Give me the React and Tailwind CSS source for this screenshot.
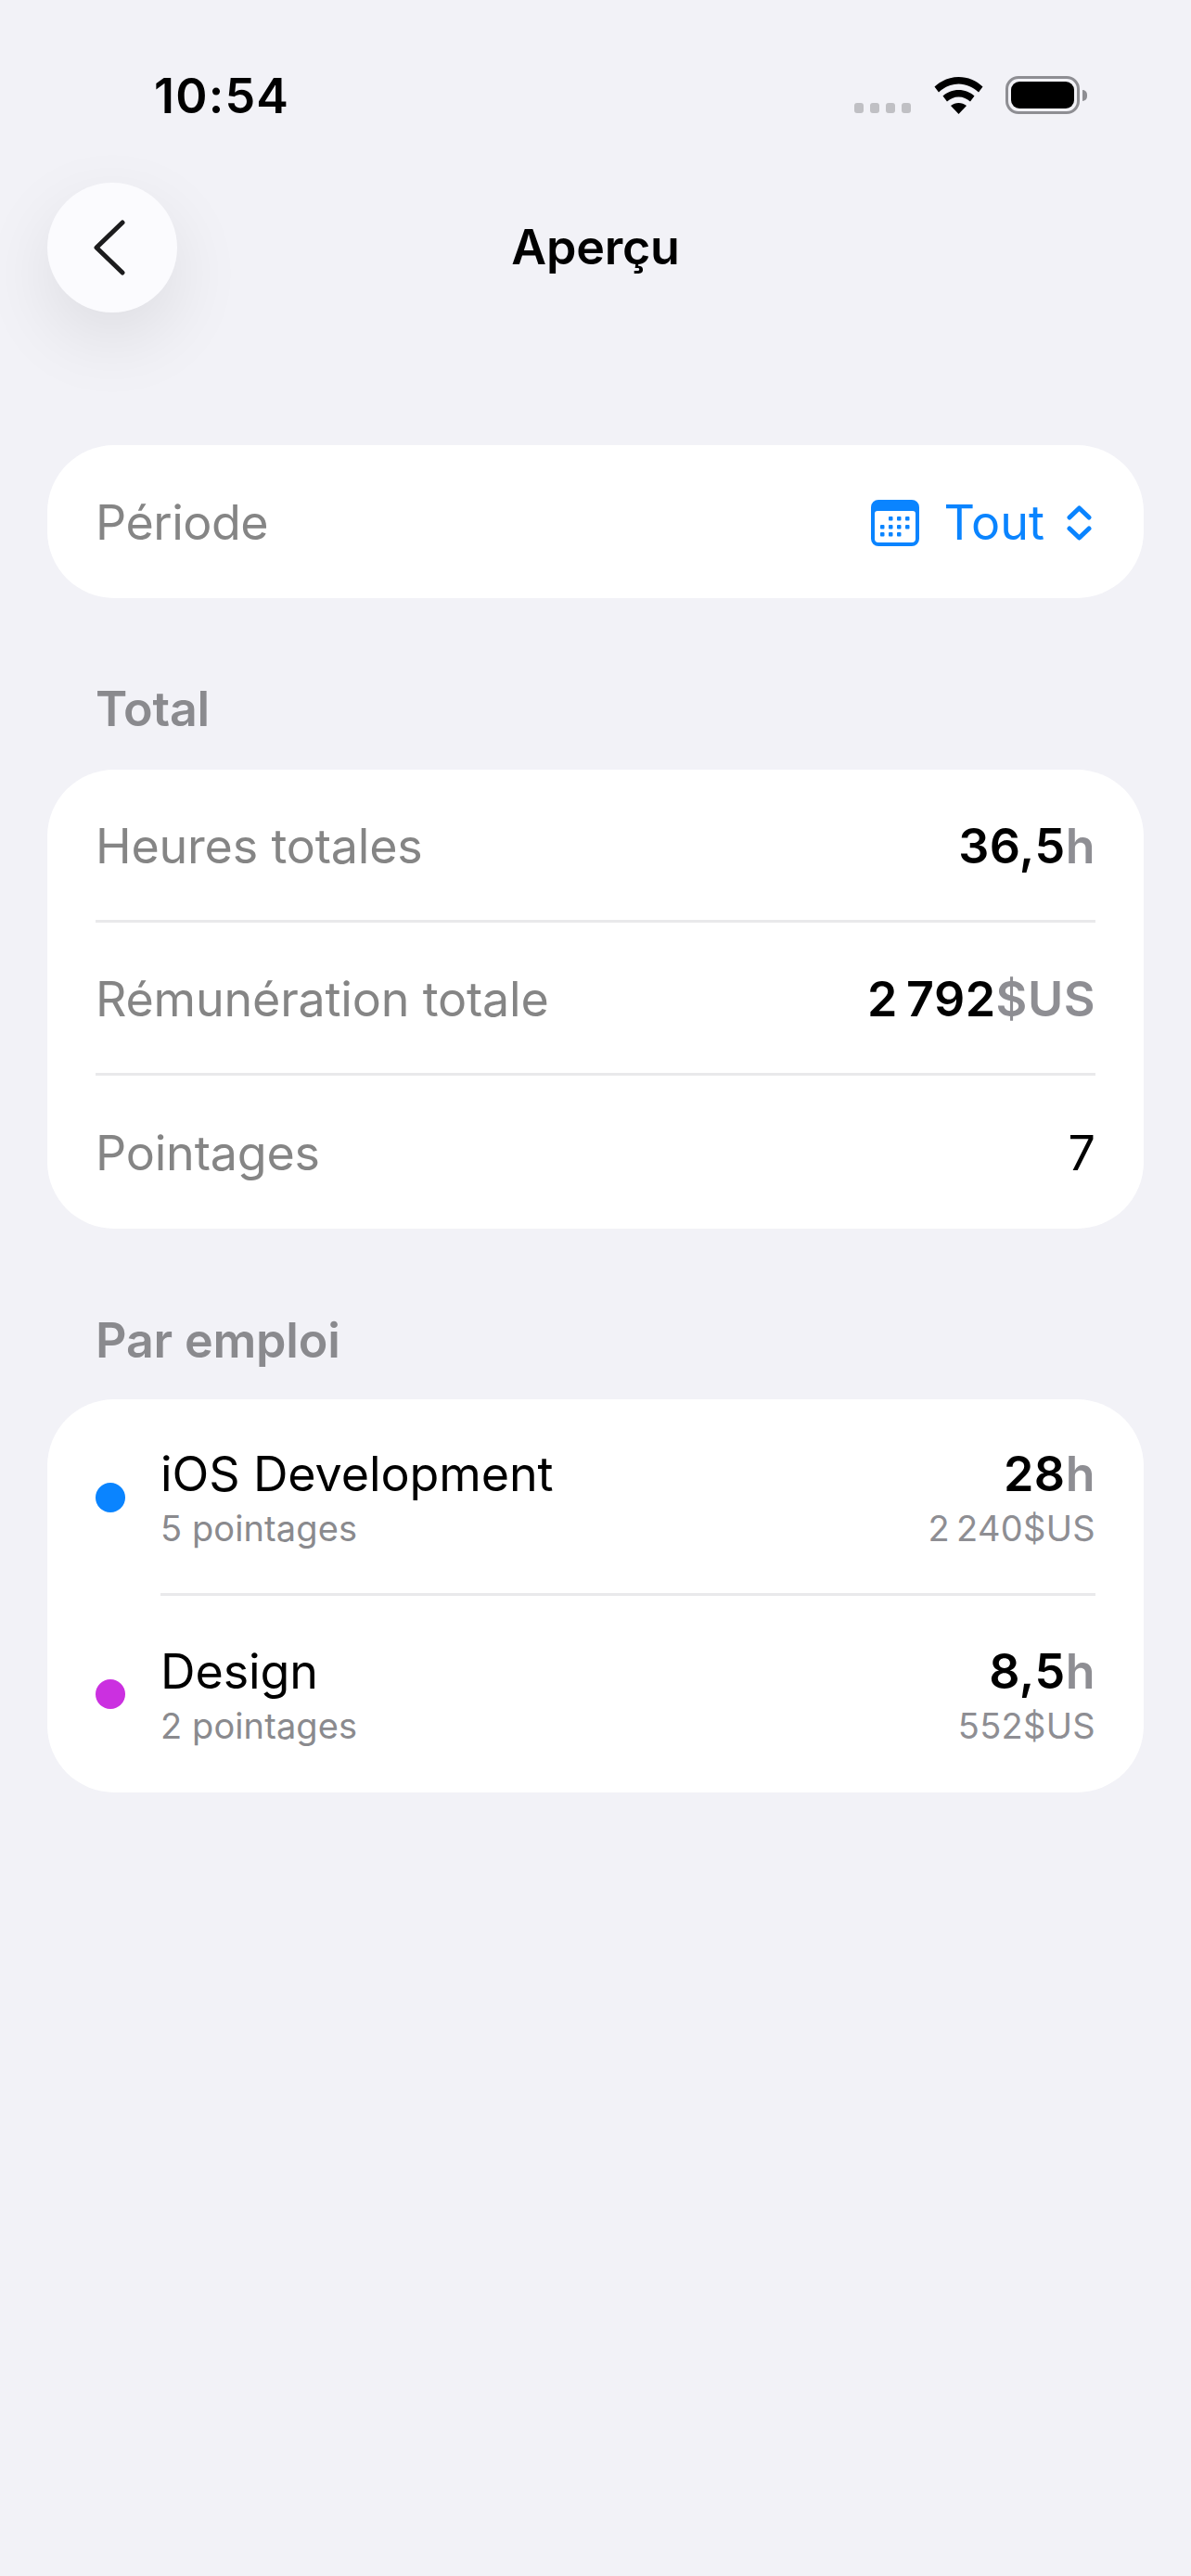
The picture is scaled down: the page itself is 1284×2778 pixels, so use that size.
const font = { fontFamily: 'Inter, sans-serif' }

const Value = ({ num, unit }) => (
  <div className="text-[52px] leading-[62px] font-semibold tracking-[0.5px] text-black">
    {num}<span className="text-[#8e8e93]">{unit}</span>
  </div>
)

const Row = ({ label, children, last }) => (
  <div className={`h-[165px] pt-[3px] flex items-center justify-between ${last ? '' : 'border-b-[3px] border-[#e9e9eb]'}`}>
    <span className="text-[52px] tracking-[-0.2px] text-[#858585]">{label}</span>
    {children}
  </div>
)

const SectionTitle = ({ children }) => (
  <h2 className="px-[103px] text-[52px] leading-[62px] font-semibold tracking-[-0.2px] text-[#8a8a8e]">{children}</h2>
)

const JobRow = ({ color, name, count, hours, pay, last }) => (
  <div className="flex items-center">
    <div className={`w-[32px] h-[32px] rounded-full mr-[38px] shrink-0 ${color}`} />
    <div className={`flex-1 flex items-center justify-between h-[212px] pt-[2px] ${last ? '' : 'border-b-[3px] border-[#e9e9eb]'}`}>
      <div>
        <div className="text-[52px] leading-[62px] tracking-[-0.1px] text-black">{name}</div>
        <div className="text-[38px] leading-[46px] tracking-[0.1px] text-[#8a8a8e] mt-[4px]">{count}</div>
      </div>
      <div className="text-right">
        <Value num={hours} unit="h" />
        <div className="text-[38px] leading-[46px] tracking-[0.3px] text-[#8e8e93] mt-[4px]">{pay}</div>
      </div>
    </div>
  </div>
)

const BackIcon = () => (
  <svg width="38" height="64" viewBox="0 0 38 64" fill="none" stroke="#1c1c1e" strokeWidth="5" strokeLinecap="round" strokeLinejoin="round">
    <path d="M33 5 L5 32 L33 59" />
  </svg>
)

const CalendarIcon = () => (
  <svg width="52" height="50" viewBox="0 0 52 50">
    <path fillRule="evenodd" fill="#0a84ff" d="M8 0h36a8 8 0 0 1 8 8v34a8 8 0 0 1-8 8H8a8 8 0 0 1-8-8V8a8 8 0 0 1 8-8zM7 12a3 3 0 0 0-3 3v27a4 4 0 0 0 4 4h36a4 4 0 0 0 4-4V15a3 3 0 0 0-3-3z" />
    {[[21, 20], [30, 20], [39, 20], [12, 29], [21, 29], [30, 29], [39, 29], [12, 37], [21, 37], [30, 37]].map(([x, y]) => (
      <rect key={`${x}-${y}`} x={x - 2} y={y - 2} width="4.5" height="4.5" rx="1" fill="#0a84ff" />
    ))}
  </svg>
)

const UpDownIcon = () => (
  <svg width="27" height="38" viewBox="0 0 27 38" fill="none" stroke="#0a84ff" strokeWidth="5" strokeLinecap="round" strokeLinejoin="round">
    <path d="M3 13 L13.5 3 L24 13" />
    <path d="M3 25 L13.5 35 L24 25" />
  </svg>
)

const StatusIcons = () => (
  <div className="flex items-end">
    <div className="flex gap-[7px] mb-[1px] mr-[25px]">
      <div className="w-[10px] h-[11px] rounded-[3px] bg-[#c0c0c4]" />
      <div className="w-[10px] h-[11px] rounded-[3px] bg-[#c0c0c4]" />
      <div className="w-[10px] h-[11px] rounded-[3px] bg-[#c0c0c4]" />
      <div className="w-[10px] h-[11px] rounded-[3px] bg-[#c0c0c4]" />
    </div>
    <svg width="53" height="40" viewBox="0 0 53 40" className="mr-[24px]">
      <path d="M26.5 0C16.5 0 7.5 4 0.5 10.5L5 16.5C11 11 18.5 7.5 26.5 7.5C34.5 7.5 42 11 48 16.5L52.5 10.5C45.5 4 36.5 0 26.5 0Z" />
      <path d="M26.5 14C20 14 14 16.5 9.5 20.5L14 26.5C17.5 23.5 21.5 21.5 26.5 21.5C31.5 21.5 35.5 23.5 39 26.5L43.5 20.5C39 16.5 33 14 26.5 14Z" />
      <path d="M26.5 28C23.5 28 20.5 29 18 31L26.5 40L35 31C32.5 29 29.5 28 26.5 28Z" />
    </svg>
    <div className="flex items-center">
      <div className="w-[80px] h-[41px] rounded-[14px] border-[3px] border-[#8e8e93] p-[3px]">
        <div className="w-full h-full rounded-[9px] bg-black" />
      </div>
      <div className="w-[5px] h-[12px] ml-[3px] rounded-r-[5px] bg-[#8e8e93]" />
    </div>
  </div>
)

const App = () => {
  return (
    <div style={font} className="min-h-[2778px] bg-[#f2f2f7] text-black">
      <div className="h-[197px] pt-[73px] pl-[166px] pr-[112px] flex items-start justify-between">
        <div className="text-[52px] leading-[62px] font-semibold tracking-[1.2px]">10:54</div>
        <div className="pt-[9px]"><StatusIcons /></div>
      </div>

      <div className="px-[51px] grid grid-cols-[140px_1fr_140px] items-center">
        <div className="w-[140px] h-[140px] rounded-full bg-[#fbfbfe] flex items-center justify-center pr-[6px] shadow-[0_28px_80px_rgba(0,0,0,0.09)]">
          <BackIcon />
        </div>
        <h1 className="text-center text-[52px] leading-[62px] font-semibold tracking-[-0.2px]">Aperçu</h1>
      </div>

      <div className="mt-[143px] mx-[51px] h-[165px] rounded-[72px] bg-white pl-[52px] pr-[56px] pt-[3px] flex items-center justify-between">
        <span className="text-[52px] tracking-[-0.5px] text-[#858585]">Période</span>
        <div className="flex items-center">
          <CalendarIcon />
          <span className="ml-[27px] mr-[24px] text-[52px] text-[#0a84ff]">Tout</span>
          <UpDownIcon />
        </div>
      </div>

      <div className="mt-[89px]"><SectionTitle>Total</SectionTitle></div>
      <div className="mt-[34px] mx-[51px] rounded-[72px] bg-white px-[52px]">
        <Row label="Heures totales"><Value num="36,5" unit="h" /></Row>
        <Row label="Rémunération totale"><Value num={'2\u202f792'} unit="$US" /></Row>
        <Row label="Pointages" last><span className="text-[52px] text-black">7</span></Row>
      </div>

      <div className="mt-[90px]"><SectionTitle>Par emploi</SectionTitle></div>
      <div className="mt-[32px] mx-[51px] rounded-[72px] bg-white px-[52px]">
        <JobRow color="bg-[#0a84ff]" name="iOS Development" count="5 pointages" hours="28" pay={'2\u202f240$US'} />
        <JobRow color="bg-[#cb30e0]" name="Design" count="2 pointages" hours="8,5" pay="552$US" last />
      </div>
    </div>
  )
}

export default App
